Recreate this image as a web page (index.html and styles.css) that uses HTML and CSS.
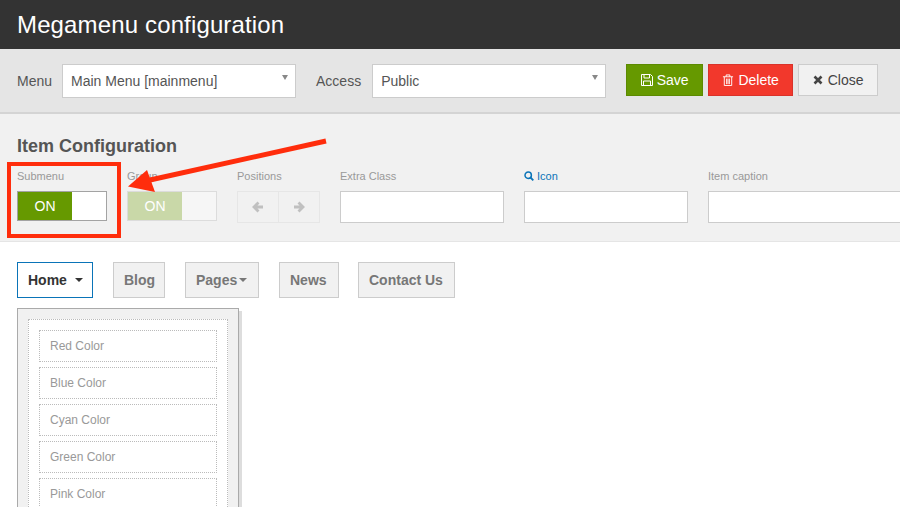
FILE: index.html
```html
<!DOCTYPE html>
<html lang="en">
<head>
<meta charset="utf-8">
<title>Megamenu configuration</title>
<link rel="stylesheet" href="styles.css">
</head>
<body>
<header class="title-bar"><h1 class="title">Megamenu configuration</h1></header>

<div class="toolbar">
  <label class="tool-label">Menu</label>
  <div class="select-wrap"><select class="select"><option>Main Menu [mainmenu]</option></select></div>
  <label class="tool-label access-label">Access</label>
  <div class="select-wrap"><select class="select"><option>Public</option></select></div>
  <div class="actions">
    <button class="btn btn-save"><svg class="btn-icon" viewBox="0 0 12 12"><path d="M.5.5h9l2 2v9H.5z M3 .5v3.5h5.5V.5 M2.5 11.5V7h7v4.5" fill="none" stroke="currentColor"/></svg>Save</button>
    <button class="btn btn-delete"><svg class="btn-icon" viewBox="0 0 12 13"><path d="M.5 3h11 M2 3v9.5h8V3 M4 3V1h4v2 M4.500 5v6 M6 5v6 M7.500 5v6" fill="none" stroke="currentColor"/></svg>Delete</button>
    <button class="btn btn-close"><svg class="btn-icon close-icon" viewBox="0 0 10 10"><path d="M1.500 1.500l7 7M8.500 1.500l-7 7" fill="none" stroke="currentColor" stroke-width="2.600"/></svg>Close</button>
  </div>
</div>

<section class="config">
  <h2 class="config-title">Item Configuration</h2>
  <div class="fields">
    <div class="field field-switch">
      <span class="field-label">Submenu</span>
      <div class="switch"><span class="switch-on">ON</span><span class="switch-off"></span></div>
    </div>
    <div class="field field-switch">
      <span class="field-label">Group</span>
      <div class="switch switch-disabled"><span class="switch-on">ON</span><span class="switch-off"></span></div>
    </div>
    <div class="field field-pos">
      <span class="field-label">Positions</span>
      <div class="pos-group">
        <span class="pos-btn"><svg class="pos-icon" viewBox="0 0 12 12"><path d="M11 6H2.500M6.500 1.500L2 6l4.500 4.500" fill="none" stroke="currentColor" stroke-width="2.800"/></svg></span>
        <span class="pos-btn"><svg class="pos-icon" viewBox="0 0 12 12"><path d="M1 6h8.500M5.500 1.500L10 6l-4.500 4.500" fill="none" stroke="currentColor" stroke-width="2.800"/></svg></span>
      </div>
    </div>
    <div class="field">
      <span class="field-label">Extra Class</span>
      <input class="text-input" type="text">
    </div>
    <div class="field">
      <span class="field-label label-link"><svg class="search-icon" viewBox="0 0 10 10"><circle cx="4.200" cy="4.200" r="3.200" fill="none" stroke="currentColor" stroke-width="1.500"/><path d="M6.500 6.500L9.300 9.300" stroke="currentColor" stroke-width="1.800"/></svg>Icon</span>
      <input class="text-input" type="text">
    </div>
    <div class="field field-last">
      <span class="field-label">Item caption</span>
      <input class="text-input" type="text">
    </div>
  </div>
</section>

<main class="builder">
  <nav class="nav">
    <a class="nav-item nav-home active">Home <span class="caret caret-home"></span></a>
    <a class="nav-item nav-blog">Blog</a>
    <a class="nav-item nav-pages">Pages<span class="caret"></span></a>
    <a class="nav-item nav-news">News</a>
    <a class="nav-item nav-contact">Contact Us</a>
  </nav>
  <div class="dropdown">
    <div class="dropdown-col">
      <div class="dropdown-item">Red Color</div>
      <div class="dropdown-item">Blue Color</div>
      <div class="dropdown-item">Cyan Color</div>
      <div class="dropdown-item">Green Color</div>
      <div class="dropdown-item">Pink Color</div>
    </div>
  </div>
</main>

<div class="callout-box"></div>
<svg class="callout-arrow" viewBox="0 0 340 80"><path d="M326 13L150 52" stroke="#ff2d0c" stroke-width="5" fill="none"/><path d="M128 58.500L147 42L155 64Z" fill="#ff2d0c"/></svg>
</body>
</html>
```

FILE: styles.css
```css
* { box-sizing: border-box; }
html, body { margin: 0; height: 507px; overflow: hidden; }
body { position: relative; width: 900px; background: #fff; font-family: "Liberation Sans", Arial, sans-serif; color: #555; }

.title-bar { height: 49px; background: #333; padding-left: 17px; display: flex; align-items: center; }
.title { margin: 0; font-size: 24px; letter-spacing: .14px; font-weight: 400; color: #fff; line-height: 49px; }

.toolbar { height: 65px; background: #e5e5e5; border-bottom: 2px solid #d4d4d4; padding: 15px 0 0 17px; display: flex; align-items: flex-start; }
.tool-label { font-size: 14px; color: #555; line-height: 34px; margin-right: 10px; }
.access-label { margin-left: 20px; margin-right: 11px; }
.select-wrap { position: relative; width: 234px; height: 34px; }
.select-wrap::after { content: ""; position: absolute; right: 8px; top: 11px; border-style: solid; border-width: 5px 3.500px 0; border-color: #888 transparent transparent; }
.select { appearance: none; width: 100%; height: 34px; background: #fff; border: 1px solid #ccc; border-radius: 0; padding: 0 8px; font: 14px "Liberation Sans", Arial, sans-serif; color: #555; }

.actions { display: flex; gap: 5px; margin-left: 20px; }
.btn { height: 32px; border: 1px solid; border-radius: 0; padding: 0; font: 14px "Liberation Sans", Arial, sans-serif; display: flex; align-items: center; justify-content: center; }
.btn-icon { width: 12px; height: 12px; margin-right: 4px; }
.close-icon { width: 10px; height: 10px; margin-right: 5px; }
.btn-save { width: 77px; background: #669900; border-color: #5c8a00; color: #fff; }
.btn-delete { width: 85px; background: #f2382c; border-color: #d9322a; color: #fff; }
.btn-close { width: 80px; background: #f1f1f1; border-color: #ccc; color: #444; }

.config { height: 128px; background: #f1f1f1; border-bottom: 1px solid #e5e5e5; padding: 21px 0 0 17px; }
.config-title { margin: 0; font-size: 18px; line-height: 22px; font-weight: 700; color: #555; }
.fields { display: flex; gap: 20px; margin-top: 12px; }
.field { width: 164px; flex: none; }
.field-switch { width: 90px; }
.field-pos { width: 83px; }
.field-last { width: 200px; }
.field-label { display: flex; align-items: center; height: 14px; font-size: 11px; line-height: 14px; color: #999; margin-bottom: 8px; }
.label-link { color: #0a74b8; }
.search-icon { width: 10px; height: 10px; margin-right: 3px; }

.switch { display: flex; width: 90px; height: 30px; border: 1px solid #a3a3a3; }
.switch-on { width: 54px; background: #669900; color: #fff; font-size: 14px; line-height: 28px; text-align: center; }
.switch-off { flex: 1; background: #fff; }
.switch-disabled { border-color: #dcdcdc; }
.switch-disabled .switch-on { background: #c9d8a8; }
.switch-disabled .switch-off { background: #f6f6f6; }

.pos-group { display: flex; width: 83px; height: 32px; border: 1px solid #e6e6e6; }
.pos-btn { flex: 1; display: flex; align-items: center; justify-content: center; color: #c0c0c0; }
.pos-btn + .pos-btn { border-left: 1px solid #e6e6e6; }
.pos-icon { width: 12px; height: 12px; }

.text-input { display: block; width: 100%; height: 32px; background: #fff; border: 1px solid #ccc; border-radius: 0; padding: 0; }
.field-last .text-input { border-right: 0; }

.builder { padding: 20px 0 0 17px; }
.nav { display: flex; gap: 20px; height: 36px; }
.nav-item { display: flex; align-items: center; flex: none; height: 36px; padding: 0 0 0 10px; background: #f1f1f1; border: 1px solid #ccc; font-size: 14px; font-weight: 700; color: #777; }
.nav-item.active { background: #fff; border-color: #0a74b8; color: #333; }
.nav-home { width: 76px; }
.nav-blog { width: 52px; }
.nav-pages { width: 74px; }
.nav-news { width: 60px; }
.nav-contact { width: 97px; margin-left: -1px; }
.caret { display: inline-block; margin-left: 2px; border-style: solid; border-width: 4px 4px 0; border-color: #777 transparent transparent; }
.caret-home { margin-left: 8px; border-top-color: #333; }

.dropdown { width: 222px; margin-top: 10px; height: 200px; background: #f1f1f1; border: 1px solid #aaa; padding: 10px; box-shadow: 3px 3px 0 #ddd; overflow: hidden; }
.dropdown-col { background: #fff; border: 1px dotted #bbb; padding: 10px; display: flex; flex-direction: column; gap: 5px; height: 220px; }
.dropdown-item { flex: none; height: 32px; padding-left: 10px; border: 1px dotted #bbb; font-size: 12px; line-height: 31px; color: #999; }

.callout-box { position: absolute; left: 7px; top: 162px; width: 114px; height: 76px; border: 4px solid #ff2d0c; }
.callout-arrow { position: absolute; left: 0; top: 128px; width: 340px; height: 80px; }
```
